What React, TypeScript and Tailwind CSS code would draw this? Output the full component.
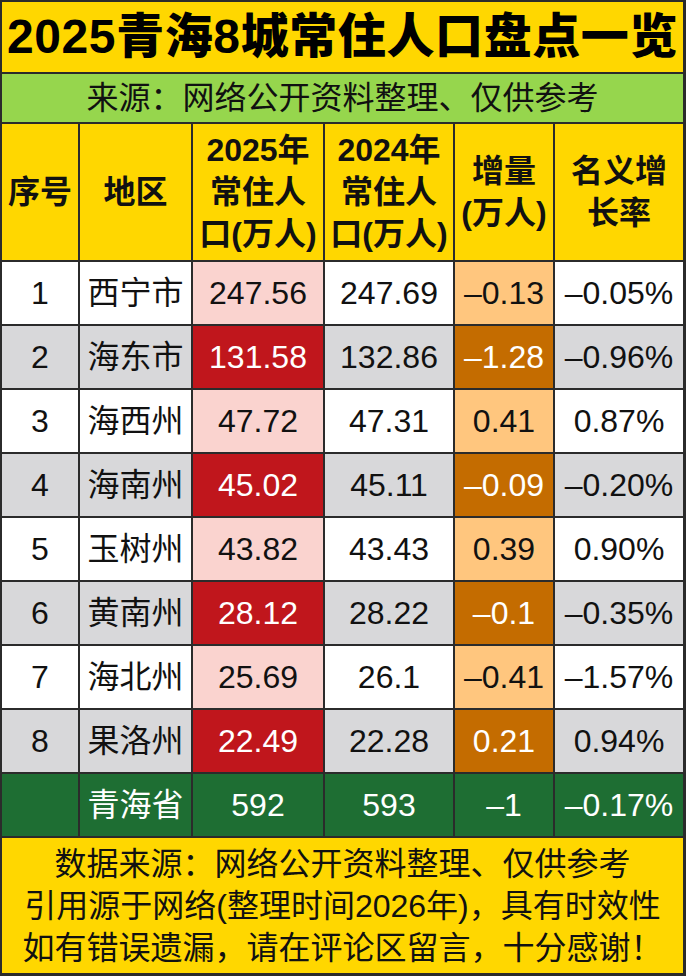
import React from "react";

type Row = {
  no: string;
  name: string;
  y2025: string;
  y2024: string;
  delta: string;
  rate: string;
};

const rows: Row[] = [
  { no: "1", name: "西宁市", y2025: "247.56", y2024: "247.69", delta: "–0.13", rate: "–0.05%" },
  { no: "2", name: "海东市", y2025: "131.58", y2024: "132.86", delta: "–1.28", rate: "–0.96%" },
  { no: "3", name: "海西州", y2025: "47.72", y2024: "47.31", delta: "0.41", rate: "0.87%" },
  { no: "4", name: "海南州", y2025: "45.02", y2024: "45.11", delta: "–0.09", rate: "–0.20%" },
  { no: "5", name: "玉树州", y2025: "43.82", y2024: "43.43", delta: "0.39", rate: "0.90%" },
  { no: "6", name: "黄南州", y2025: "28.12", y2024: "28.22", delta: "–0.1", rate: "–0.35%" },
  { no: "7", name: "海北州", y2025: "25.69", y2024: "26.1", delta: "–0.41", rate: "–1.57%" },
  { no: "8", name: "果洛州", y2025: "22.49", y2024: "22.28", delta: "0.21", rate: "0.94%" },
];

const font = "font-['Liberation_Sans','Noto_Sans_CJK_SC',sans-serif]";
const cell = "flex items-center justify-center h-[62px] text-[32px] leading-none";
const head = "flex flex-col items-center justify-center text-center font-bold text-[32px] leading-[42px] bg-[#FFD700] text-[#111]";

export default function App() {
  return (
    <div className={`w-[686px] h-[976px] bg-[#2b2b2b] pt-[2px] pl-[2px] pr-[3px] pb-[3px] flex flex-col gap-[2px] text-[#111] ${font}`}>
      {/* 标题 */}
      <div className="h-[70px] shrink-0 bg-[#FFD700] flex items-center justify-center">
        <h1 className="text-[48px] font-black leading-none tracking-[0.6px] text-black">2025青海8城常住人口盘点一览</h1>
      </div>
      <div className="h-[48px] shrink-0 bg-[#96D64D] flex items-center justify-center text-[32px] leading-none">
        来源：网络公开资料整理、仅供参考
      </div>

      {/* 表格 */}
      <div className="grid grid-cols-[76px_111px_130px_128px_98px_128px] gap-[2px] shrink-0">
        <div className={`${head} h-[136px]`}>序号</div>
        <div className={head}>地区</div>
        <div className={head}>
          <span>2025年</span>
          <span>常住人</span>
          <span>口(万人)</span>
        </div>
        <div className={head}>
          <span>2024年</span>
          <span>常住人</span>
          <span>口(万人)</span>
        </div>
        <div className={head}>
          <span>增量</span>
          <span>(万人)</span>
        </div>
        <div className={head}>
          <span>名义增</span>
          <span>长率</span>
        </div>

        {rows.map((r, i) => {
          const even = i % 2 === 1;
          const base = even ? "bg-[#D8D8DA]" : "bg-white";
          return (
            <React.Fragment key={r.no}>
              <div className={`${cell} ${base}`}>{r.no}</div>
              <div className={`${cell} ${base}`}>{r.name}</div>
              <div className={`${cell} ${even ? "bg-[#C0161C] text-white" : "bg-[#FAD3CF]"}`}>{r.y2025}</div>
              <div className={`${cell} ${base}`}>{r.y2024}</div>
              <div className={`${cell} ${even ? "bg-[#C46C00] text-white" : "bg-[#FFC67E]"}`}>{r.delta}</div>
              <div className={`${cell} ${base}`}>{r.rate}</div>
            </React.Fragment>
          );
        })}

        <div className={`${cell} bg-[#1E6E33]`} />
        <div className={`${cell} bg-[#1E6E33] text-white`}>青海省</div>
        <div className={`${cell} bg-[#1E6E33] text-white`}>592</div>
        <div className={`${cell} bg-[#1E6E33] text-white`}>593</div>
        <div className={`${cell} bg-[#1E6E33] text-white`}>–1</div>
        <div className={`${cell} bg-[#1E6E33] text-white`}>–0.17%</div>
      </div>

      {/* 底部说明 */}
      <div className="flex-1 bg-[#FFD700] flex flex-col items-center justify-center text-[32px] leading-[42px]">
        <p>数据来源：网络公开资料整理、仅供参考</p>
        <p>引用源于网络(整理时间2026年)，具有时效性</p>
        <p>如有错误遗漏，请在评论区留言，十分感谢！</p>
      </div>
    </div>
  );
}
